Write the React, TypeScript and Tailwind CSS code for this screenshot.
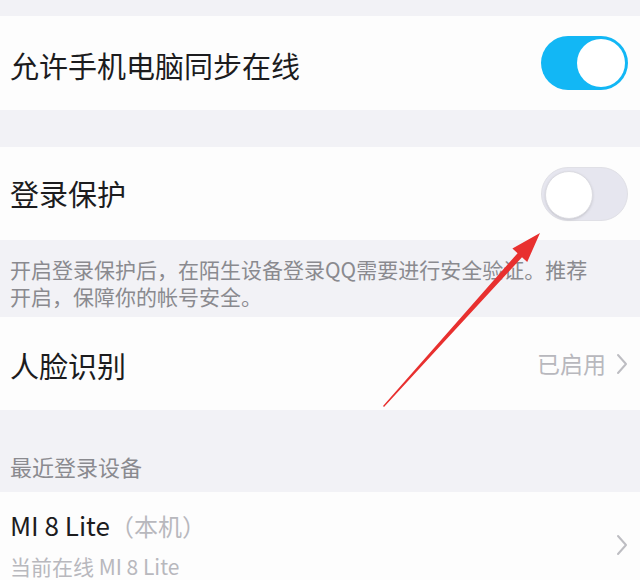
const font = { fontFamily: '"Noto Sans CJK SC", "Noto Sans", sans-serif' };

function Toggle({ on }: { on: boolean }) {
  return (
    <div
      className={`w-[87px] h-[54px] rounded-full p-[3px] flex ${
        on ? 'bg-[#12b7f5] justify-end' : 'bg-[#e6e6ef] justify-start border border-[#e0e0e6]'
      }`}
    >
      <div
        className={`w-[48px] h-[48px] rounded-full bg-white ${
          on ? '' : 'border border-[#dcdce2] shadow-sm'
        }`}
      />
    </div>
  );
}

function Chevron({ className }: { className?: string }) {
  return (
    <svg width="12" height="22" viewBox="0 0 12 22" className={className}>
      <path d="M2 2 L10 11 L2 20" fill="none" stroke="#bdbdc2" strokeWidth="2" strokeLinecap="round" strokeLinejoin="round" />
    </svg>
  );
}

export default function App() {
  return (
    <div className="relative w-[640px] h-[580px] overflow-hidden bg-[#f2f2f6]" style={font}>
      <div className="h-4" />

      {/* Sync online */}
      <div className="h-[94px] bg-[#fdfdfd] pl-[10px] pr-[12px] flex items-center justify-between">
        <span className="text-[29px] text-[#1c1c1e] leading-none pt-[4px]">允许手机电脑同步在线</span>
        <Toggle on />
      </div>

      <div className="h-[37px]" />

      {/* Login protection */}
      <div className="h-[93px] bg-[#fdfdfd] pl-[10px] pr-[12px] flex items-center justify-between">
        <span className="text-[29px] text-[#1c1c1e] leading-none">登录保护</span>
        <Toggle on={false} />
      </div>

      <div className="h-[77px] px-[10px] pt-[16px] text-[21px] leading-[27px] text-[#8a8a8f] whitespace-nowrap">
        <div>开启登录保护后，在陌生设备登录QQ需要进行安全验证。推荐</div>
        <div>开启，保障你的帐号安全。</div>
      </div>

      {/* Face recognition */}
      <div className="h-[93px] bg-[#fdfdfd] pl-[10px] pr-[12px] flex items-center justify-between">
        <span className="text-[29px] text-[#1c1c1e] leading-none pt-[4px]">人脸识别</span>
        <div className="flex items-center gap-[10px]">
          <span className="text-[23px] text-[#b8b8bd] leading-none">已启用</span>
          <Chevron />
        </div>
      </div>

      <div className="h-[82px] px-[10px] flex items-end pb-[15px]">
        <span className="text-[22px] text-[#8a8a8f] leading-none">最近登录设备</span>
      </div>

      {/* Device */}
      <div className="h-[120px] bg-[#fdfdfd] pl-[10px] pr-[12px] pt-[20px] flex justify-between">
        <div className="flex flex-col gap-[18px]">
          <div className="leading-none">
            <span className="text-[26px] text-[#1c1c1e]">MI 8 Lite</span>
            <span className="text-[24px] text-[#b8b8bd]">（本机）</span>
          </div>
          <span className="text-[21px] text-[#b8b8bd] leading-none">当前在线 MI 8 Lite</span>
        </div>
        <Chevron className="mt-[22px]" />
      </div>

      {/* Red annotation arrow */}
      <svg className="absolute inset-0 pointer-events-none" width="640" height="580" viewBox="0 0 640 580">
        <polygon
          points="383,406 517.6,253.2 512.4,248.5 540,233 527.2,262 522,257.2 384,407"
          fill="#e8302f"
        />
      </svg>
    </div>
  );
}
